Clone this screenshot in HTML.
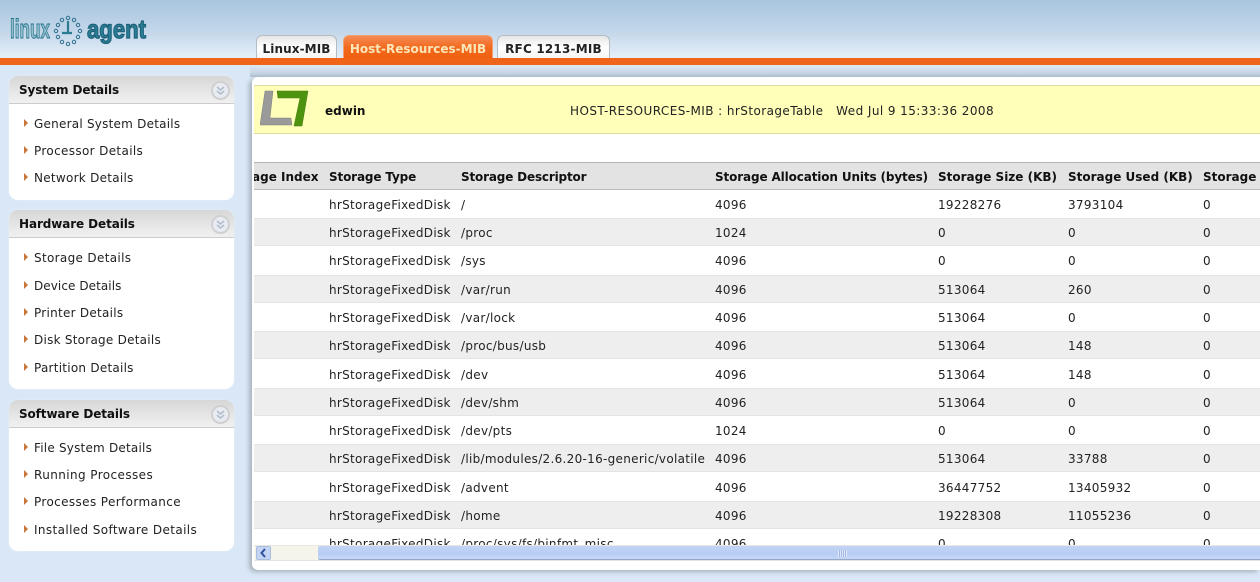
<!DOCTYPE html>
<html><head><meta charset="utf-8">
<style>
html,body{margin:0;padding:0}
body{width:1260px;height:582px;overflow:hidden;position:relative;background:#d9e7f6;font-family:"DejaVu Sans",Verdana,sans-serif;font-size:12px;color:#222}
div{position:absolute;box-sizing:border-box}
.t{line-height:20px;height:20px;white-space:nowrap}
.b{font-weight:bold;color:#111}
.tab{top:35px;height:24px;border:1px solid #b4bcc4;border-bottom:0;border-radius:6px 6px 0 0;background:linear-gradient(#e6e6e6,#fff 50%,#f4f4f4);font-weight:bold;font-size:12px;line-height:26px;text-align:center;color:#222}
.box{left:9px;width:225px;background:#fff;border-radius:9px;box-shadow:0 0 3px #e6eef8}
.hd{left:0;top:0;width:225px;height:28px;border-radius:9px 9px 0 0;background:linear-gradient(#d6d6d6,#ececec 80%,#f0f0f0);border-bottom:1px solid #ccc}
.hd span{position:absolute;left:10px;top:4px;line-height:20px;font-weight:bold;color:#111;font-size:12px;letter-spacing:-.1px}
.hd svg{position:absolute;left:202px;top:5px}
.ar{width:0;height:0;border-left:4px solid #c8763a;border-top:4px solid transparent;border-bottom:4px solid transparent}
.r{left:254px;width:1006px;height:28px}
.g{background:#eee;border-top:1px solid #e4e4e4;border-bottom:1px solid #e4e4e4}
#tb .t{letter-spacing:.3px}
#tb .t.b{letter-spacing:0}
</style></head><body>
<div style="left:0;top:0;width:1260px;height:58px;background:linear-gradient(#a9c5dd,#c3d7ea 55%,#e6eff8)"></div>
<svg style="position:absolute;left:0;top:5px" width="160" height="50" viewBox="0 0 160 50">
<text x="10" y="33" font-family="Liberation Sans,sans-serif" font-weight="bold" font-size="27" textLength="40" lengthAdjust="spacingAndGlyphs" fill="#8fbccb" stroke="#1f6f88" stroke-width=".9">linux</text>
<g fill="none" stroke="#2c6f8e" stroke-width="1"><circle cx="68" cy="13" r="1.7"/><circle cx="74" cy="15" r="1.7"/><circle cx="78" cy="20" r="1.7"/><circle cx="80" cy="26" r="1.7"/><circle cx="78" cy="32" r="1.7"/><circle cx="74" cy="37" r="1.7"/><circle cx="68" cy="39" r="1.7"/><circle cx="62" cy="37" r="1.7"/><circle cx="58" cy="32" r="1.7"/><circle cx="56" cy="26" r="1.700"/><circle cx="58" cy="20" r="1.7"/><circle cx="62" cy="15" r="1.7"/></g>
<path d="M68 16V28M62 28H72" stroke="#2c7d92" stroke-width="2.2" fill="none"/>
<text x="87" y="33" font-family="Liberation Sans,sans-serif" font-weight="bold" font-size="26" textLength="59" lengthAdjust="spacingAndGlyphs" fill="#2a7d95" stroke="#1d6178" stroke-width="1.200">agent</text>
</svg>
<div class="tab" style="left:256px;width:81px;letter-spacing:.1px">Linux-MIB</div>
<div class="tab" style="left:343px;width:150px;background:linear-gradient(#f48a55,#f26a1e 50%,#ef5f10);border-color:#f0a070;color:#fbe6b8">Host-Resources-MIB</div>
<div class="tab" style="left:497px;width:113px;letter-spacing:.2px">RFC 1213-MIB</div>
<div style="left:0;top:58px;width:1260px;height:7px;background:#f0641a"></div>
<div style="left:250px;top:65px;width:1010px;height:12px;background:linear-gradient(#dfe9f4,#c3d3e4 70%,#aebccc)"></div>

<div class="box" style="top:76px;height:124px"><div class="hd"><span>System Details</span><svg width="19" height="19" viewBox="0 0 19 19"><circle cx="9.500" cy="9.500" r="8.500" fill="#e8ecf2" stroke="#d0d0d0" stroke-width="2"/><path d="M6 6l3.500 3 3.500-3M6 10l3.500 3 3.500-3" fill="none" stroke="#b0bccc" stroke-width="1.500"/></svg></div></div>
<div class="ar" style="left:24px;top:119px"></div><div class="t" style="left:34px;top:114px;letter-spacing:.23px">General System Details</div>
<div class="ar" style="left:24px;top:146px"></div><div class="t" style="left:34px;top:141px;letter-spacing:.35px">Processor Details</div>
<div class="ar" style="left:24px;top:173px"></div><div class="t" style="left:34px;top:168px;letter-spacing:.27px">Network Details</div>

<div class="box" style="top:210px;height:179px"><div class="hd"><span>Hardware Details</span><svg width="19" height="19" viewBox="0 0 19 19"><circle cx="9.500" cy="9.500" r="8.500" fill="#e8ecf2" stroke="#d0d0d0" stroke-width="2"/><path d="M6 6l3.500 3 3.500-3M6 10l3.500 3 3.500-3" fill="none" stroke="#b0bccc" stroke-width="1.500"/></svg></div></div>
<div class="ar" style="left:24px;top:253px"></div><div class="t" style="left:34px;top:248px;letter-spacing:.33px">Storage Details</div>
<div class="ar" style="left:24px;top:281px"></div><div class="t" style="left:34px;top:276px;letter-spacing:.07px">Device Details</div>
<div class="ar" style="left:24px;top:308px"></div><div class="t" style="left:34px;top:303px;letter-spacing:.27px">Printer Details</div>
<div class="ar" style="left:24px;top:335px"></div><div class="t" style="left:34px;top:330px;letter-spacing:.25px">Disk Storage Details</div>
<div class="ar" style="left:24px;top:363px"></div><div class="t" style="left:34px;top:358px;letter-spacing:.25px">Partition Details</div>

<div class="box" style="top:400px;height:151px"><div class="hd"><span>Software Details</span><svg width="19" height="19" viewBox="0 0 19 19"><circle cx="9.500" cy="9.500" r="8.500" fill="#e8ecf2" stroke="#d0d0d0" stroke-width="2"/><path d="M6 6l3.500 3 3.500-3M6 10l3.500 3 3.500-3" fill="none" stroke="#b0bccc" stroke-width="1.500"/></svg></div></div>
<div class="ar" style="left:24px;top:443px"></div><div class="t" style="left:34px;top:438px;letter-spacing:.21px">File System Details</div>
<div class="ar" style="left:24px;top:470px"></div><div class="t" style="left:34px;top:465px;letter-spacing:.41px">Running Processes</div>
<div class="ar" style="left:24px;top:497px"></div><div class="t" style="left:34px;top:492px;letter-spacing:.38px">Processes Performance</div>
<div class="ar" style="left:24px;top:525px"></div><div class="t" style="left:34px;top:520px;letter-spacing:.38px">Installed Software Details</div>

<div style="left:252px;top:77px;width:1008px;height:493px;background:#fff;box-shadow:-3px 2px 4px #a9b4c0;border-radius:6px 0 0 6px;overflow:hidden">
<div style="left:2px;top:8px;width:1006px;height:49px;background:#ffffb9;border-top:1px solid #dcdca0;border-bottom:1px solid #dcdca0"></div>
<svg style="position:absolute;left:8px;top:12px" width="50" height="38" viewBox="0 0 50 38">
<path d="M5 2H13L10 29H31L32 36H0Z" fill="#9a9a9a" stroke="#808080" stroke-width=".5"/>
<path d="M17 2H48L42 37H34L40 9H18Z" fill="#4e9310" stroke="#3c7a0a" stroke-width=".5"/>
</svg>
</div>
<div class="t b" style="left:325px;top:101px">edwin</div>
<div class="t" style="left:570px;top:101px;letter-spacing:.43px">HOST-RESOURCES-MIB : hrStorageTable &nbsp; Wed Jul 9 15:33:36 2008</div>

<div class="r" style="top:162px;background:#e3e3e3;border-top:1px solid #b5b5b5;border-bottom:1px solid #bbb"></div>
<div class="r g" style="top:218px"></div>
<div class="r g" style="top:275px"></div>
<div class="r g" style="top:331px"></div>
<div class="r g" style="top:388px"></div>
<div class="r g" style="top:444px"></div>
<div class="r g" style="top:501px"></div>

<div id="tb" style="left:254px;top:167px;width:1006px;height:378px;overflow:hidden">
<div class="t b" style="left:-2px;top:0">age Index</div>
<div class="t b" style="left:75px;top:0;letter-spacing:-.15px">Storage Type</div>
<div class="t b" style="left:207px;top:0;letter-spacing:-.17px">Storage Descriptor</div>
<div class="t b" style="left:461px;top:0;letter-spacing:-.13px">Storage Allocation Units (bytes)</div>
<div class="t b" style="left:684px;top:0">Storage Size (KB)</div>
<div class="t b" style="left:814px;top:0">Storage Used (KB)</div>
<div class="t b" style="left:949px;top:0">Storage</div>

<div class="t" style="left:75px;top:28px">hrStorageFixedDisk</div><div class="t" style="left:207px;top:28px">/</div><div class="t" style="left:461px;top:28px">4096</div><div class="t" style="left:684px;top:28px">19228276</div><div class="t" style="left:814px;top:28px">3793104</div><div class="t" style="left:949px;top:28px">0</div>
<div class="t" style="left:75px;top:56px">hrStorageFixedDisk</div><div class="t" style="left:207px;top:56px">/proc</div><div class="t" style="left:461px;top:56px">1024</div><div class="t" style="left:684px;top:56px">0</div><div class="t" style="left:814px;top:56px">0</div><div class="t" style="left:949px;top:56px">0</div>
<div class="t" style="left:75px;top:84px">hrStorageFixedDisk</div><div class="t" style="left:207px;top:84px">/sys</div><div class="t" style="left:461px;top:84px">4096</div><div class="t" style="left:684px;top:84px">0</div><div class="t" style="left:814px;top:84px">0</div><div class="t" style="left:949px;top:84px">0</div>
<div class="t" style="left:75px;top:113px">hrStorageFixedDisk</div><div class="t" style="left:207px;top:113px">/var/run</div><div class="t" style="left:461px;top:113px">4096</div><div class="t" style="left:684px;top:113px">513064</div><div class="t" style="left:814px;top:113px">260</div><div class="t" style="left:949px;top:113px">0</div>
<div class="t" style="left:75px;top:141px">hrStorageFixedDisk</div><div class="t" style="left:207px;top:141px">/var/lock</div><div class="t" style="left:461px;top:141px">4096</div><div class="t" style="left:684px;top:141px">513064</div><div class="t" style="left:814px;top:141px">0</div><div class="t" style="left:949px;top:141px">0</div>
<div class="t" style="left:75px;top:169px">hrStorageFixedDisk</div><div class="t" style="left:207px;top:169px">/proc/bus/usb</div><div class="t" style="left:461px;top:169px">4096</div><div class="t" style="left:684px;top:169px">513064</div><div class="t" style="left:814px;top:169px">148</div><div class="t" style="left:949px;top:169px">0</div>
<div class="t" style="left:75px;top:198px">hrStorageFixedDisk</div><div class="t" style="left:207px;top:198px">/dev</div><div class="t" style="left:461px;top:198px">4096</div><div class="t" style="left:684px;top:198px">513064</div><div class="t" style="left:814px;top:198px">148</div><div class="t" style="left:949px;top:198px">0</div>
<div class="t" style="left:75px;top:226px">hrStorageFixedDisk</div><div class="t" style="left:207px;top:226px">/dev/shm</div><div class="t" style="left:461px;top:226px">4096</div><div class="t" style="left:684px;top:226px">513064</div><div class="t" style="left:814px;top:226px">0</div><div class="t" style="left:949px;top:226px">0</div>
<div class="t" style="left:75px;top:254px">hrStorageFixedDisk</div><div class="t" style="left:207px;top:254px">/dev/pts</div><div class="t" style="left:461px;top:254px">1024</div><div class="t" style="left:684px;top:254px">0</div><div class="t" style="left:814px;top:254px">0</div><div class="t" style="left:949px;top:254px">0</div>
<div class="t" style="left:75px;top:282px">hrStorageFixedDisk</div><div class="t" style="left:207px;top:282px">/lib/modules/2.6.20-16-generic/volatile</div><div class="t" style="left:461px;top:282px">4096</div><div class="t" style="left:684px;top:282px">513064</div><div class="t" style="left:814px;top:282px">33788</div><div class="t" style="left:949px;top:282px">0</div>
<div class="t" style="left:75px;top:311px">hrStorageFixedDisk</div><div class="t" style="left:207px;top:311px">/advent</div><div class="t" style="left:461px;top:311px">4096</div><div class="t" style="left:684px;top:311px">36447752</div><div class="t" style="left:814px;top:311px">13405932</div><div class="t" style="left:949px;top:311px">0</div>
<div class="t" style="left:75px;top:339px">hrStorageFixedDisk</div><div class="t" style="left:207px;top:339px">/home</div><div class="t" style="left:461px;top:339px">4096</div><div class="t" style="left:684px;top:339px">19228308</div><div class="t" style="left:814px;top:339px">11055236</div><div class="t" style="left:949px;top:339px">0</div>
<div class="t" style="left:75px;top:367px">hrStorageFixedDisk</div><div class="t" style="left:207px;top:367px">/proc/sys/fs/binfmt_misc</div><div class="t" style="left:461px;top:367px">4096</div><div class="t" style="left:684px;top:367px">0</div><div class="t" style="left:814px;top:367px">0</div><div class="t" style="left:949px;top:367px">0</div>
</div>

<div style="left:254px;top:545px;width:1006px;height:16px;background:linear-gradient(90deg,#f4f4ea,#fdfdf6);border-top:1px solid #e8e8e0;border-bottom:1px solid #dfe4e8"></div>
<div style="left:256px;top:546px;width:15px;height:14px;border:1px solid #a8bce0;border-radius:2px;background:#c3d4f4"></div>
<svg style="position:absolute;left:256px;top:546px" width="15" height="14" viewBox="0 0 15 14"><path d="M9 3L5.500 7L9 11" fill="none" stroke="#30509a" stroke-width="2"/></svg>
<div style="left:318px;top:546px;width:942px;height:14px;background:linear-gradient(#c2d4f6,#b8cdf4 60%,#c8d8f6);border-bottom:1px solid #93a8c8;border-radius:2px 0 0 2px"></div>
<div style="left:838px;top:550px;width:9px;height:7px;background:repeating-linear-gradient(90deg,#dfe8fb 0 1px,#a5b9e0 1px 2px)"></div>
</body></html>
